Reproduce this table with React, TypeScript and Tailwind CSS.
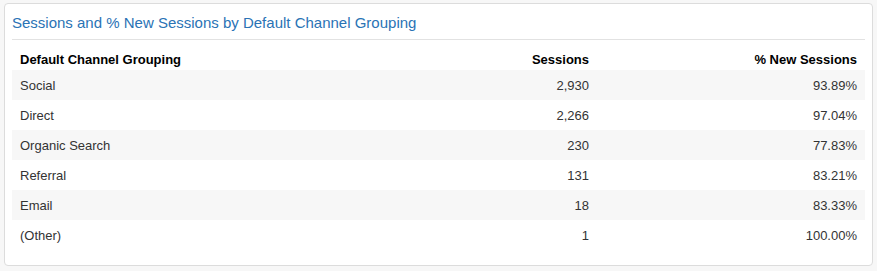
import React from 'react';

interface Row {
  channel: string;
  sessions: string;
  newSessions: string;
}

const rows: Row[] = [
  { channel: 'Social', sessions: '2,930', newSessions: '93.89%' },
  { channel: 'Direct', sessions: '2,266', newSessions: '97.04%' },
  { channel: 'Organic Search', sessions: '230', newSessions: '77.83%' },
  { channel: 'Referral', sessions: '131', newSessions: '83.21%' },
  { channel: 'Email', sessions: '18', newSessions: '83.33%' },
  { channel: '(Other)', sessions: '1', newSessions: '100.00%' },
];

const App: React.FC = () => {
  return (
    <div
      className="min-h-[271px] bg-[#f7f7f7] pt-[3px] pl-[4px] pr-[4px]"
      style={{ fontFamily: '"Liberation Sans", Arial, sans-serif' }}
    >
      <div className="h-[263px] rounded-[4px] border border-[#dcdcdc] bg-white px-[7px]">
        <h2 className="h-[36px] border-b border-[#e2e2e2] pt-[10px] text-[15px] leading-[18px] text-[#2a73b5]">
          Sessions and % New Sessions by Default Channel Grouping
        </h2>
        <table className="w-full border-collapse text-[13px] text-[#333]">
          <thead>
            <tr className="h-[30px] text-black">
              <th className="px-2 pb-[3px] align-bottom text-left font-bold leading-[15px]">Default Channel Grouping</th>
              <th className="w-[300px] px-2 pb-[3px] align-bottom text-right font-bold leading-[15px]">Sessions</th>
              <th className="w-[268px] px-2 pb-[3px] align-bottom text-right font-bold leading-[15px]">% New Sessions</th>
            </tr>
          </thead>
          <tbody>
            {rows.map((row, i) => (
              <tr key={row.channel} className={i % 2 === 0 ? 'h-[30px] bg-[#f7f7f7]' : 'h-[30px] bg-white'}>
                <td className="px-2 pt-[2px] text-left">{row.channel}</td>
                <td className="px-2 pt-[2px] text-right">{row.sessions}</td>
                <td className="px-2 pt-[2px] text-right">{row.newSessions}</td>
              </tr>
            ))}
          </tbody>
        </table>
      </div>
    </div>
  );
};

export default App;
